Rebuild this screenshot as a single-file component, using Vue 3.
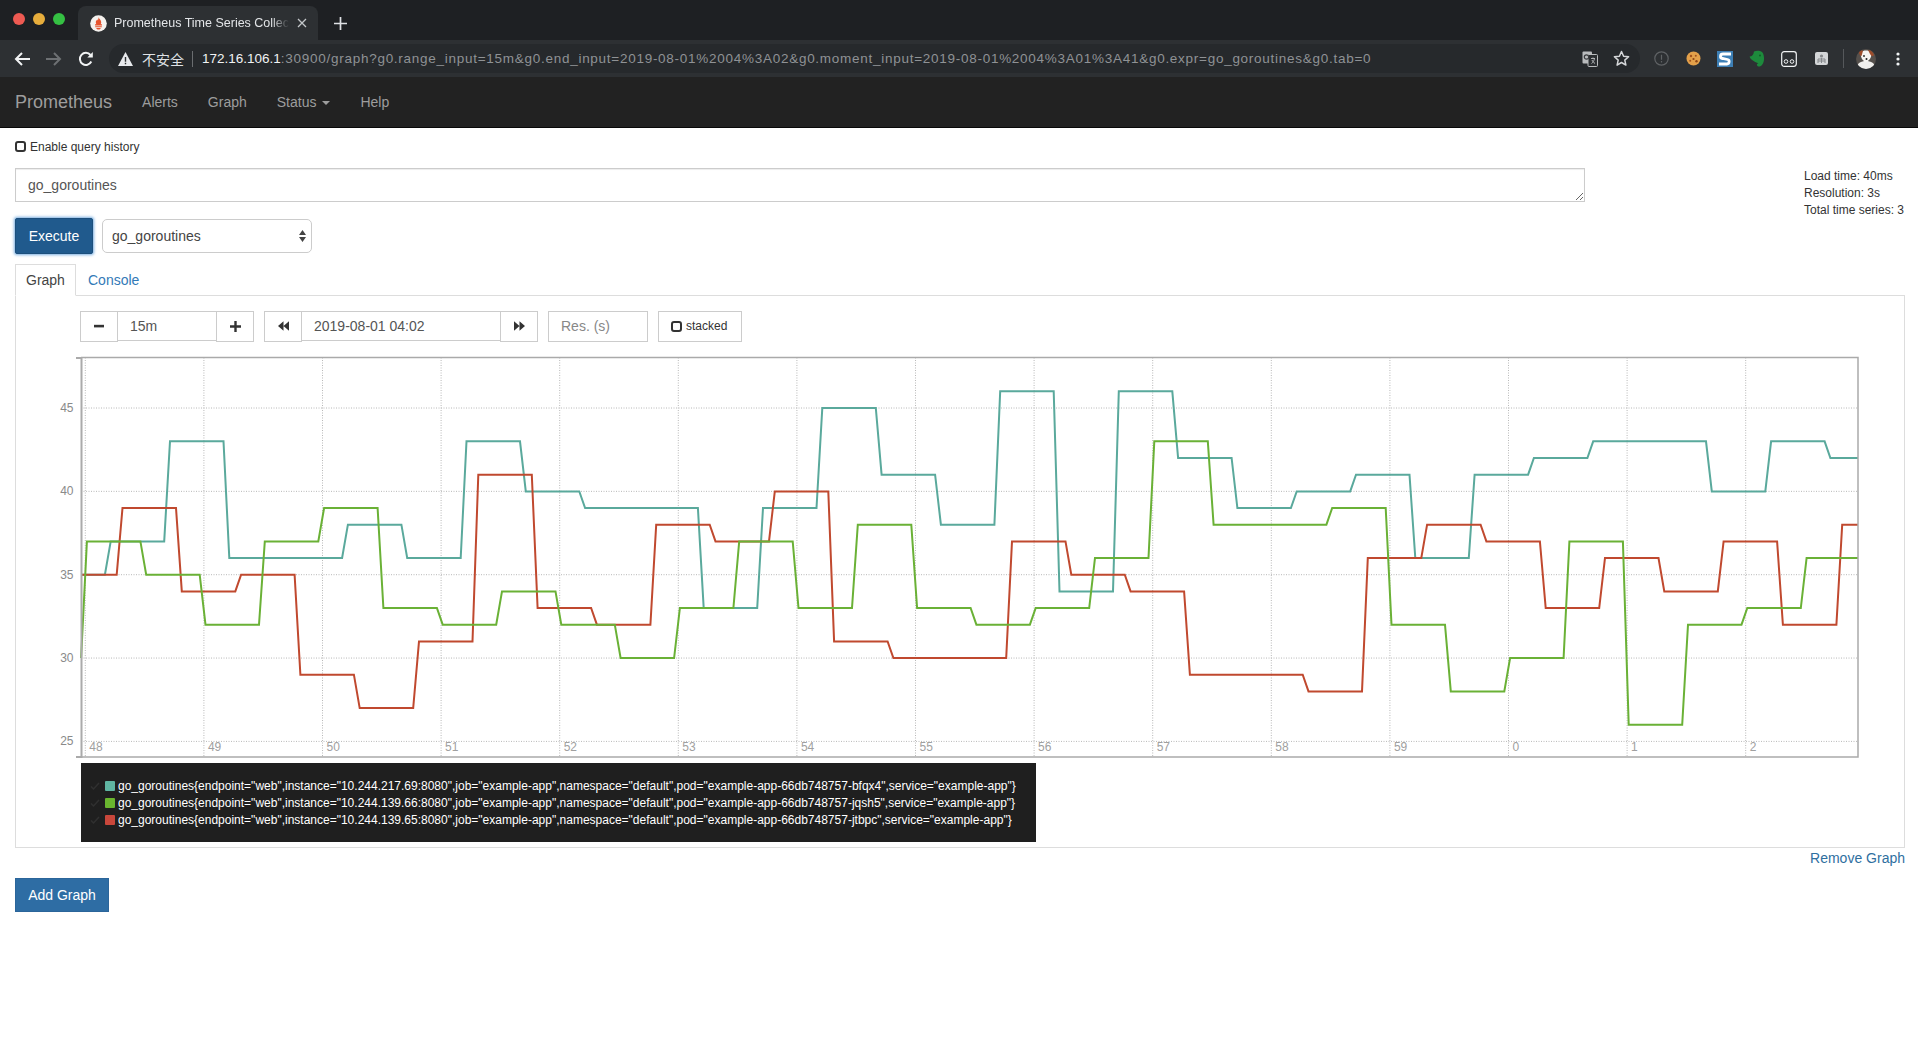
<script setup>
const period = 59.3
const ramp = 5.8
const chartLeft = 81
const chartRight = 1858
const chartTop = 357.5
const chartBottom = 757
const yOf = (v) => 408 + (45 - v) * 16.67

function seriesPoints(startValue, firstX, values) {
  const pts = [[chartLeft, yOf(startValue)]]
  let prev = startValue
  values.forEach((v, k) => {
    if (v === prev) return
    const x = firstX + k * period
    pts.push([x, yOf(prev)], [x + ramp, yOf(v)])
    prev = v
  })
  pts.push([chartRight, yOf(prev)])
  return pts.map((p) => p[0].toFixed(1) + ',' + p[1].toFixed(1)).join(' ')
}

const series = [
  {
    color: '#5aa99c',
    points: seriesPoints(35, 104.9, [37, 43, 36, 36, 38, 36, 43, 40, 39, 39, 33, 39, 45, 41, 38, 46, 34, 46, 42, 39, 40, 41, 36, 41, 42, 43, 43, 40, 43, 42])
  },
  {
    color: '#c0492f',
    points: seriesPoints(35, 116.7, [39, 34, 35, 29, 27, 31, 41, 33, 32, 38, 37, 40, 31, 30, 30, 37, 35, 34, 29, 29, 28, 36, 38, 37, 33, 36, 34, 37, 32, 38])
  },
  {
    color: '#6ab136',
    points: seriesPoints(30, 81.1, [37, 35, 32, 37, 39, 33, 32, 34, 32, 30, 33, 37, 33, 38, 33, 32, 33, 36, 43, 38, 38, 39, 32, 28, 30, 37, 26, 32, 33, 36])
  }
]

const yTicks = [45, 40, 35, 30, 25].map((v) => ({ v, y: yOf(v) }))
const xLabels = ['48', '49', '50', '51', '52', '53', '54', '55', '56', '57', '58', '59', '0', '1', '2']
const xTicks = xLabels.map((label, i) => ({ label, x: 85.3 + i * 118.6 }))

const legend = [
  { color: '#5fb5a2', text: 'go_goroutines{endpoint="web",instance="10.244.217.69:8080",job="example-app",namespace="default",pod="example-app-66db748757-bfqx4",service="example-app"}' },
  { color: '#69b52f', text: 'go_goroutines{endpoint="web",instance="10.244.139.66:8080",job="example-app",namespace="default",pod="example-app-66db748757-jqsh5",service="example-app"}' },
  { color: '#c8473b', text: 'go_goroutines{endpoint="web",instance="10.244.139.65:8080",job="example-app",namespace="default",pod="example-app-66db748757-jtbpc",service="example-app"}' }
]

const urlRest = ':30900/graph?g0.range_input=15m&g0.end_input=2019-08-01%2004%3A02&g0.moment_input=2019-08-01%2004%3A01%3A41&g0.expr=go_goroutines&g0.tab=0'
</script>

<template>
  <div class="page">
    <div class="tabstrip">
      <div class="lights">
        <span class="light red"></span>
        <span class="light yellow"></span>
        <span class="light green"></span>
      </div>
      <div class="browser-tab">
        <svg class="favicon" width="17" height="17" viewBox="0 0 17 17">
          <circle cx="8.5" cy="8.5" r="8.3" fill="#f4f1ee" />
          <path d="M8.6 2.2c.5 1.7 2.6 2.7 2.6 5 0 .9-.3 1.5-.6 2H12v1.3H5V9.200h1.400c-.3-.5-.6-1.100-.6-2 0-1.500 1.100-2 1.500-3 .3.500.4 1 .5 1.400.4-.9.800-2.100.8-3.400z" fill="#e6522c" />
          <path d="M5.200 11.300h6.600v1H5.200zM6.200 13h4.600c-.3 1-1.200 1.600-2.300 1.600S6.500 14 6.200 13z" fill="#e6522c" />
        </svg>
        <span class="tab-title">Prometheus Time Series Collec</span>
        <svg class="tab-close" width="10" height="10" viewBox="0 0 10 10"><path d="M1 1l8 8M9 1l-8 8" stroke="#c4c7ca" stroke-width="1.300" /></svg>
      </div>
      <svg class="new-tab" width="13" height="13" viewBox="0 0 13 13"><path d="M6.500 0v13M0 6.500h13" stroke="#dfe1e5" stroke-width="1.700" /></svg>
    </div>

    <div class="toolbar">
      <div class="nav-slot">
        <svg width="18" height="18" viewBox="0 0 18 18" fill="none" stroke="#f1f3f4" stroke-width="2"><path d="M17 9H3M9 3L3 9l6 6" /></svg>
      </div>
      <div class="nav-slot">
        <svg width="18" height="18" viewBox="0 0 18 18" fill="none" stroke="#6d7073" stroke-width="2"><path d="M1 9h14M9 3l6 6-6 6" /></svg>
      </div>
      <div class="nav-slot">
        <svg width="16" height="16" viewBox="0 0 16 16" fill="none" stroke="#f1f3f4" stroke-width="2"><path d="M13.300 10.500A6 6 0 1 1 12.500 4" /><path d="M14.800 1v5.500H9.300z" fill="#f1f3f4" stroke="none" /></svg>
      </div>
      <div class="omnibox">
        <svg class="warn" width="15" height="14" viewBox="0 0 15 14"><path d="M7.500 0L15 14H0z" fill="#e8eaed" /><path d="M6.800 5h1.400v4.800H6.800zM6.800 10.800h1.400v1.400H6.800z" fill="#2b2e31" /></svg>
        <span class="insecure">不安全</span>
        <span class="omni-sep"></span>
        <span class="url"><span class="host">172.16.106.1</span><span class="url-rest">{{ urlRest }}</span></span>
        <svg class="translate" width="16" height="16" viewBox="0 0 16 16">
          <rect x="0.500" y="0.500" width="9.500" height="12" rx="1" fill="#b9bbbd" />
          <rect x="6" y="3.500" width="9.500" height="12" rx="1" fill="#2b2e31" stroke="#b9bbbd" />
          <circle cx="4.500" cy="6" r="2.200" fill="none" stroke="#3a3c3f" stroke-width="1.200" />
          <path d="M9 7.500h4M11 6.500v1M9.500 12.500c1.500-1 2.500-2.500 3-5M10 9c.7 1.500 1.500 2.500 3 3.500" fill="none" stroke="#b9bbbd" stroke-width="0.900" />
        </svg>
        <svg class="star" width="17" height="17" viewBox="0 0 17 17"><path d="M8.500 1.500l2.100 4.700 5 .5-3.800 3.400 1.100 5-4.400-2.600-4.400 2.600 1.100-5-3.800-3.400 5-.5z" fill="none" stroke="#d5d7d9" stroke-width="1.500" stroke-linejoin="round" /></svg>
      </div>
      <div class="ext-row">
        <div class="ext">
          <svg width="15" height="15" viewBox="0 0 15 15" fill="none" stroke="#5f6265" stroke-width="1.200"><circle cx="7.500" cy="7.500" r="6.700" /><path d="M7.500 3.800v5M7.500 10v1.400" /></svg>
        </div>
        <div class="ext">
          <svg width="15" height="15" viewBox="0 0 15 15"><circle cx="7.500" cy="7.500" r="7" fill="#e3a04a" /><circle cx="5" cy="5" r="1.200" fill="#a1511c" /><circle cx="9.800" cy="4.700" r="1" fill="#a1511c" /><circle cx="7.500" cy="8" r="1.100" fill="#8f4615" /><circle cx="4.200" cy="9.800" r="1" fill="#a1511c" /><circle cx="10.500" cy="10.200" r="1.200" fill="#8f4615" /></svg>
        </div>
        <div class="ext">
          <svg width="16" height="16" viewBox="0 0 16 16"><rect width="16" height="16" fill="#3d7fb5" /><path d="M14 3H6C3 3 2.500 7 5.500 7.500l5 1C13 9 12.500 13 10 13H2" fill="none" stroke="#fff" stroke-width="2.800" /></svg>
        </div>
        <div class="ext">
          <svg width="16" height="17" viewBox="0 0 16 17"><path d="M5 1.500C7 .3 11 .3 13 2c1.700 1.500 2.500 6 1.800 9-.5 2.500-1.700 4.500-3.500 5.300-1.300.5-2.800.2-3.300-1-.4-1 .4-2 1.500-2-1-.5-3.200-.8-4.500-2C3 10 1 8.500.6 6.500 3 6.500 4.500 5 5 1.500z" fill="#1d8a3c" /><circle cx="11" cy="5.500" r="0.900" fill="#0f5a25" /></svg>
        </div>
        <div class="ext">
          <svg width="16" height="16" viewBox="0 0 16 16" fill="none" stroke="#f1f3f4"><rect x="0.700" y="0.700" width="14.600" height="14.600" rx="2.500" stroke-width="1.200" /><circle cx="5" cy="10.500" r="1.800" /><circle cx="11" cy="10.500" r="1.800" /></svg>
        </div>
        <div class="ext">
          <svg width="13" height="13" viewBox="0 0 13 13"><rect width="13" height="13" rx="2" fill="#d3d5d7" /><circle cx="6.500" cy="4" r="1.600" fill="#84878a" /><path d="M3 11V7h7v4M6.500 6v5M3 9h7" fill="none" stroke="#84878a" /></svg>
        </div>
        <span class="ext-sep"></span>
        <div class="ext avatar-slot">
          <svg width="20" height="20" viewBox="0 0 20 20">
            <clipPath id="avatarClip"><circle cx="10" cy="10" r="10" /></clipPath>
            <g clip-path="url(#avatarClip)">
              <rect width="20" height="20" fill="#55504c" />
              <path d="M0 20c1-6 5-8 10-8s9 2 10 8z" fill="#f0efed" />
              <path d="M5 3c2-2 8-2 10 0 1 3 0 8-5 10C6 12 4 7 5 3z" fill="#f6f4f1" />
              <path d="M12 1c3 0 5 2 6 5-1 2-3 1-4-1z" fill="#9c4c2b" />
              <path d="M3 3c1-2 3-2 4-1L5.500 7C4 7 3 5 3 3z" fill="#9c4c2b" />
              <circle cx="8" cy="7" r="0.900" fill="#222" />
              <circle cx="10.500" cy="10" r="1" fill="#222" />
            </g>
          </svg>
        </div>
        <div class="ext dots">
          <svg width="4" height="14" viewBox="0 0 4 14" fill="#f1f3f4"><circle cx="2" cy="2" r="1.600" /><circle cx="2" cy="7" r="1.600" /><circle cx="2" cy="12" r="1.600" /></svg>
        </div>
      </div>
    </div>

    <nav class="navbar">
      <span class="brand">Prometheus</span>
      <a class="nav-link">Alerts</a>
      <a class="nav-link">Graph</a>
      <a class="nav-link">Status <span class="caret"></span></a>
      <a class="nav-link">Help</a>
    </nav>

    <main class="main">
      <label class="history"><span class="check"></span>Enable query history</label>

      <div class="query-grid">
        <div class="query-left">
          <textarea class="expr" rows="1" readonly>go_goroutines</textarea>
          <div class="exec-row">
            <button class="btn-exec">Execute</button>
            <div class="select-wrap">
              <select class="metric">
                <option>go_goroutines</option>
              </select>
              <svg class="select-arrows" width="7" height="12" viewBox="0 0 7 12" fill="#444"><path d="M3.500 0L7 5H0zM3.500 12L0 7h7z" /></svg>
            </div>
          </div>
        </div>
        <div class="stats">
          <div>Load time: 40ms</div>
          <div>Resolution: 3s</div>
          <div>Total time series: 3</div>
        </div>
      </div>

      <div class="tabs">
        <span class="tab active">Graph</span>
        <span class="tab">Console</span>
      </div>

      <section class="pane">
        <div class="controls">
          <div class="group">
            <button class="ctl-btn">
              <svg width="10" height="10" viewBox="0 0 10 10"><path d="M0 3.800h10v2.600H0z" fill="#333" /></svg>
            </button>
            <input class="ctl-input range" value="15m" readonly />
            <button class="ctl-btn">
              <svg width="11" height="11" viewBox="0 0 12 12"><path d="M4.700 0h2.600v4.700H12v2.600H7.300V12H4.700V7.300H0V4.700h4.700z" fill="#333" /></svg>
            </button>
          </div>
          <div class="group">
            <button class="ctl-btn">
              <svg width="11" height="10" viewBox="0 0 13 11"><path d="M6.500 0v11L0 5.500zM13 0v11L6.500 5.500z" fill="#333" /></svg>
            </button>
            <input class="ctl-input date" value="2019-08-01 04:02" readonly />
            <button class="ctl-btn">
              <svg width="11" height="10" viewBox="0 0 13 11"><path d="M0 0v11l6.500-5.500zM6.500 0v11L13 5.500z" fill="#333" /></svg>
            </button>
          </div>
          <input class="ctl-input res" placeholder="Res. (s)" readonly />
          <button class="stacked"><span class="check"></span>stacked</button>
        </div>

        <svg class="chart" width="1820" height="411" viewBox="50 350 1820 411">
          <g class="grid">
            <line v-for="t in yTicks" :key="'h' + t.v" :x1="chartLeft" :x2="chartRight" :y1="t.y" :y2="t.y" />
            <line v-for="t in xTicks" :key="'v' + t.label" :x1="t.x" :x2="t.x" :y1="chartTop" :y2="chartBottom" />
          </g>
          <polyline v-for="s in series" :key="s.color" :points="s.points" :stroke="s.color" fill="none" stroke-width="2" />
          <path class="frame" d="M81 357.500H1858V757H81" />
          <path class="y-axis" d="M76 358H81.500V757H76" />
          <text v-for="t in yTicks" :key="'yl' + t.v" class="tick-y" x="73.500" :y="t.y + 4">{{ t.v }}</text>
          <text v-for="t in xTicks" :key="'xl' + t.label" class="tick-x" :x="t.x + 4" y="751">{{ t.label }}</text>
        </svg>

        <div class="legend">
          <div v-for="row in legend" :key="row.color" class="legend-row">
            <svg class="legend-check" width="10" height="10" viewBox="0 0 10 10"><path d="M1 5.500l2.500 2.500L9 2" fill="none" stroke="#303030" stroke-width="1.500" /></svg>
            <span class="swatch" :style="{ background: row.color }"></span>
            <span>{{ row.text }}</span>
          </div>
        </div>
      </section>

      <div class="remove-row"><a class="remove">Remove Graph</a></div>
      <button class="btn-add">Add Graph</button>
    </main>
  </div>
</template>

<style scoped>
.page {
  width: 1918px;
  font-family: "Liberation Sans", Arial, sans-serif;
  font-size: 14px;
  color: #333;
}
.tabstrip {
  height: 40px;
  background: #1e2023;
  display: flex;
  align-items: flex-end;
  box-sizing: border-box;
}
.lights {
  display: flex;
  gap: 8px;
  width: 78px;
  padding-left: 13px;
  box-sizing: border-box;
  align-self: flex-start;
  padding-top: 13px;
}
.light {
  width: 12px;
  height: 12px;
  border-radius: 50%;
}
.red { background: #ee5a52; }
.yellow { background: #e7ad3c; }
.green { background: #35c043; }
.browser-tab {
  width: 240px;
  height: 34px;
  background: #2d3033;
  border-radius: 8px 8px 0 0;
  display: flex;
  align-items: center;
  padding: 0 11px 0 12px;
  box-sizing: border-box;
}
.favicon { flex: none; }
.tab-title {
  width: 176px;
  margin-left: 7px;
  font-size: 12.500px;
  color: #e3e5e8;
  white-space: nowrap;
  -webkit-mask-image: linear-gradient(90deg, #000 90%, transparent);
  mask-image: linear-gradient(90deg, #000 90%, transparent);
}
.tab-close {
  margin-left: 8px;
  flex: none;
}
.new-tab {
  margin: 0 0 10px 16px;
}
.toolbar {
  height: 37px;
  background: #2d3033;
  display: flex;
  align-items: center;
  padding-left: 6px;
  box-sizing: border-box;
}
.nav-slot {
  width: 32px;
  height: 32px;
  flex: none;
  display: flex;
  align-items: center;
  justify-content: center;
}
.omnibox {
  width: 1531px;
  height: 29px;
  margin-left: 7px;
  flex: none;
  border-radius: 15px;
  background: #26292c;
  display: flex;
  align-items: center;
  padding-left: 9px;
  box-sizing: border-box;
}
.warn { flex: none; }
.insecure {
  margin-left: 9px;
  font-family: "Noto Sans CJK SC", "Liberation Sans", sans-serif;
  font-size: 14px;
  color: #dfe1e5;
}
.omni-sep {
  width: 1px;
  height: 16px;
  margin: 0 9px 0 8px;
  background: #6a6d70;
}
.url {
  width: 1367px;
  flex: none;
  font-size: 13.500px;
  color: #8f9295;
  white-space: nowrap;
}
.url-rest { letter-spacing: .73px; }
.host { color: #f1f3f4; }
.translate { margin-left: 13px; flex: none; }
.star { margin-left: 15px; flex: none; }
.ext-row {
  display: flex;
  align-items: center;
  padding-left: 5px;
}
.ext {
  width: 32px;
  height: 24px;
  flex: none;
  display: flex;
  align-items: center;
  justify-content: center;
}
.ext-sep {
  width: 1px;
  height: 19px;
  background: #55585b;
  margin: 0 6px;
}
.avatar-slot { width: 32px; margin-left: 0; }
.dots { width: 32px; }
.navbar {
  height: 50px;
  background: #222;
  border-bottom: 1px solid #080808;
  display: flex;
  align-items: center;
  padding-left: 15px;
}
.brand {
  font-size: 18px;
  color: #9d9d9d;
  margin-right: 15px;
}
.nav-link {
  padding: 0 15px;
  color: #9d9d9d;
  font-size: 14px;
  white-space: nowrap;
}
.caret {
  display: inline-block;
  width: 0;
  height: 0;
  margin-left: 2px;
  vertical-align: middle;
  border-top: 4px solid #9d9d9d;
  border-left: 4px solid transparent;
  border-right: 4px solid transparent;
}
.main {
  padding: 10px 13px 0 15px;
}
.history {
  display: flex;
  align-items: center;
  height: 17px;
  font-size: 12px;
  color: #333;
}
.check {
  display: inline-block;
  width: 11px;
  height: 11px;
  box-sizing: border-box;
  border: 2px solid #333;
  border-radius: 3px;
  margin-right: 4px;
  flex: none;
}
.query-grid {
  display: flex;
  justify-content: space-between;
  margin-top: 12.500px;
}
.query-left {
  width: 1570px;
}
.expr {
  display: block;
  width: 100%;
  height: 34px;
  box-sizing: border-box;
  padding: 6px 12px;
  border: 1px solid #ccc;
  outline: none;
  font-family: inherit;
  font-size: 14px;
  line-height: 20px;
  color: #555;
  background: #fff;
  box-shadow: inset 0 1px 1px rgba(0, 0, 0, .075);
}
.exec-row {
  display: flex;
  gap: 9px;
  margin-top: 16px;
  align-items: center;
}
.btn-exec {
  width: 78px;
  height: 36px;
  background: #205a8d;
  border: 1px solid #1c4f7c;
  border-radius: 2px;
  box-shadow: 0 0 3px 1px #79aee0;
  color: #fff;
  font-family: inherit;
  font-size: 14px;
  padding: 0;
}
.select-wrap {
  position: relative;
  width: 210px;
  height: 34px;
}
.metric {
  appearance: none;
  width: 100%;
  height: 100%;
  box-sizing: border-box;
  background: #fff;
  border: 1px solid #ccc;
  border-radius: 5px;
  padding: 1px 9px 0;
  font-family: inherit;
  font-size: 14px;
  color: #444;
}
.select-arrows {
  position: absolute;
  right: 6px;
  top: 11px;
}
.stats {
  font-size: 12px;
  line-height: 17.200px;
  color: #333;
  white-space: nowrap;
  width: 101px;
}
.tabs {
  display: flex;
  margin-top: 10px;
  height: 32px;
  position: relative;
  z-index: 1;
}
.tab {
  padding: 0 10px;
  line-height: 33px;
  color: #337ab7;
}
.tab.active {
  width: 61px;
  box-sizing: border-box;
  color: #444;
  line-height: 31px;
  background: #fff;
  border: 1px solid #ddd;
  border-bottom: 1px solid #fff;
  margin-right: 2px;
}
.pane {
  margin-top: -1px;
  border: 1px solid #ddd;
  height: 553px;
  box-sizing: border-box;
  padding-top: 15px;
}
.controls {
  display: flex;
  align-items: flex-start;
  padding-left: 64px;
  gap: 10px;
  height: 31px;
}
.group {
  display: flex;
}
.ctl-btn {
  width: 38px;
  height: 31px;
  padding: 0;
  background: #fff;
  border: 1px solid #ccc;
  display: flex;
  align-items: center;
  justify-content: center;
  flex: none;
}
.ctl-input {
  height: 30px;
  box-sizing: border-box;
  border: 1px solid #ccc;
  outline: none;
  font-family: inherit;
  font-size: 14px;
  color: #555;
  padding: 0 12px;
  background: #fff;
}
.ctl-input::placeholder { color: #888; opacity: 1; }
.group .ctl-input {
  border-left: none;
  border-right: none;
}
.range { width: 98px; }
.date { width: 198px; }
.res { width: 100px; height: 31px; }
.stacked {
  width: 84px;
  height: 31px;
  box-sizing: border-box;
  border: 1px solid #ccc;
  background: #fff;
  font-family: inherit;
  font-size: 12px;
  color: #333;
  display: flex;
  align-items: center;
  padding: 0 0 0 12px;
}
.stacked .check { margin-right: 4px; }
.chart {
  display: block;
  margin: 8px 0 0 34px;
}
.grid line {
  stroke: #b8b8b8;
  stroke-width: 1;
  stroke-dasharray: 1 1.500;
}
.frame {
  fill: none;
  stroke: #aaa;
  stroke-width: 1.500;
}
.y-axis {
  fill: none;
  stroke: #aaa;
  stroke-width: 2;
}
.tick-y {
  font-family: "Liberation Sans", Arial, sans-serif;
  font-size: 12px;
  fill: #8a8a8a;
  text-anchor: end;
}
.tick-x {
  font-family: "Liberation Sans", Arial, sans-serif;
  font-size: 12px;
  fill: #a0a0a0;
}
.legend {
  width: fit-content;
  margin: 2px 0 0 65px;
  padding: 14.500px 20.500px 13.500px 9px;
  background: #1f1f1f;
  color: #fff;
  font-size: 12px;
  white-space: nowrap;
}
.legend-row {
  display: flex;
  align-items: center;
  height: 17px;
}
.legend-check { margin-right: 0; flex: none; margin-left: 0; }
.swatch {
  width: 10px;
  height: 10px;
  border-radius: 1px;
  margin: 0 3px 0 5px;
  flex: none;
}
.remove-row {
  display: flex;
  justify-content: flex-end;
  line-height: 20px;
}
.remove {
  color: #2f6f9f;
}
.btn-add {
  display: block;
  width: 94px;
  height: 34px;
  margin-top: 10px;
  background: #2e6da4;
  border: 1px solid #2b659a;
  color: #fff;
  font-family: inherit;
  font-size: 14px;
  padding: 0;
}
</style>

<style>
html, body {
  margin: 0;
  background: #fff;
}
</style>
